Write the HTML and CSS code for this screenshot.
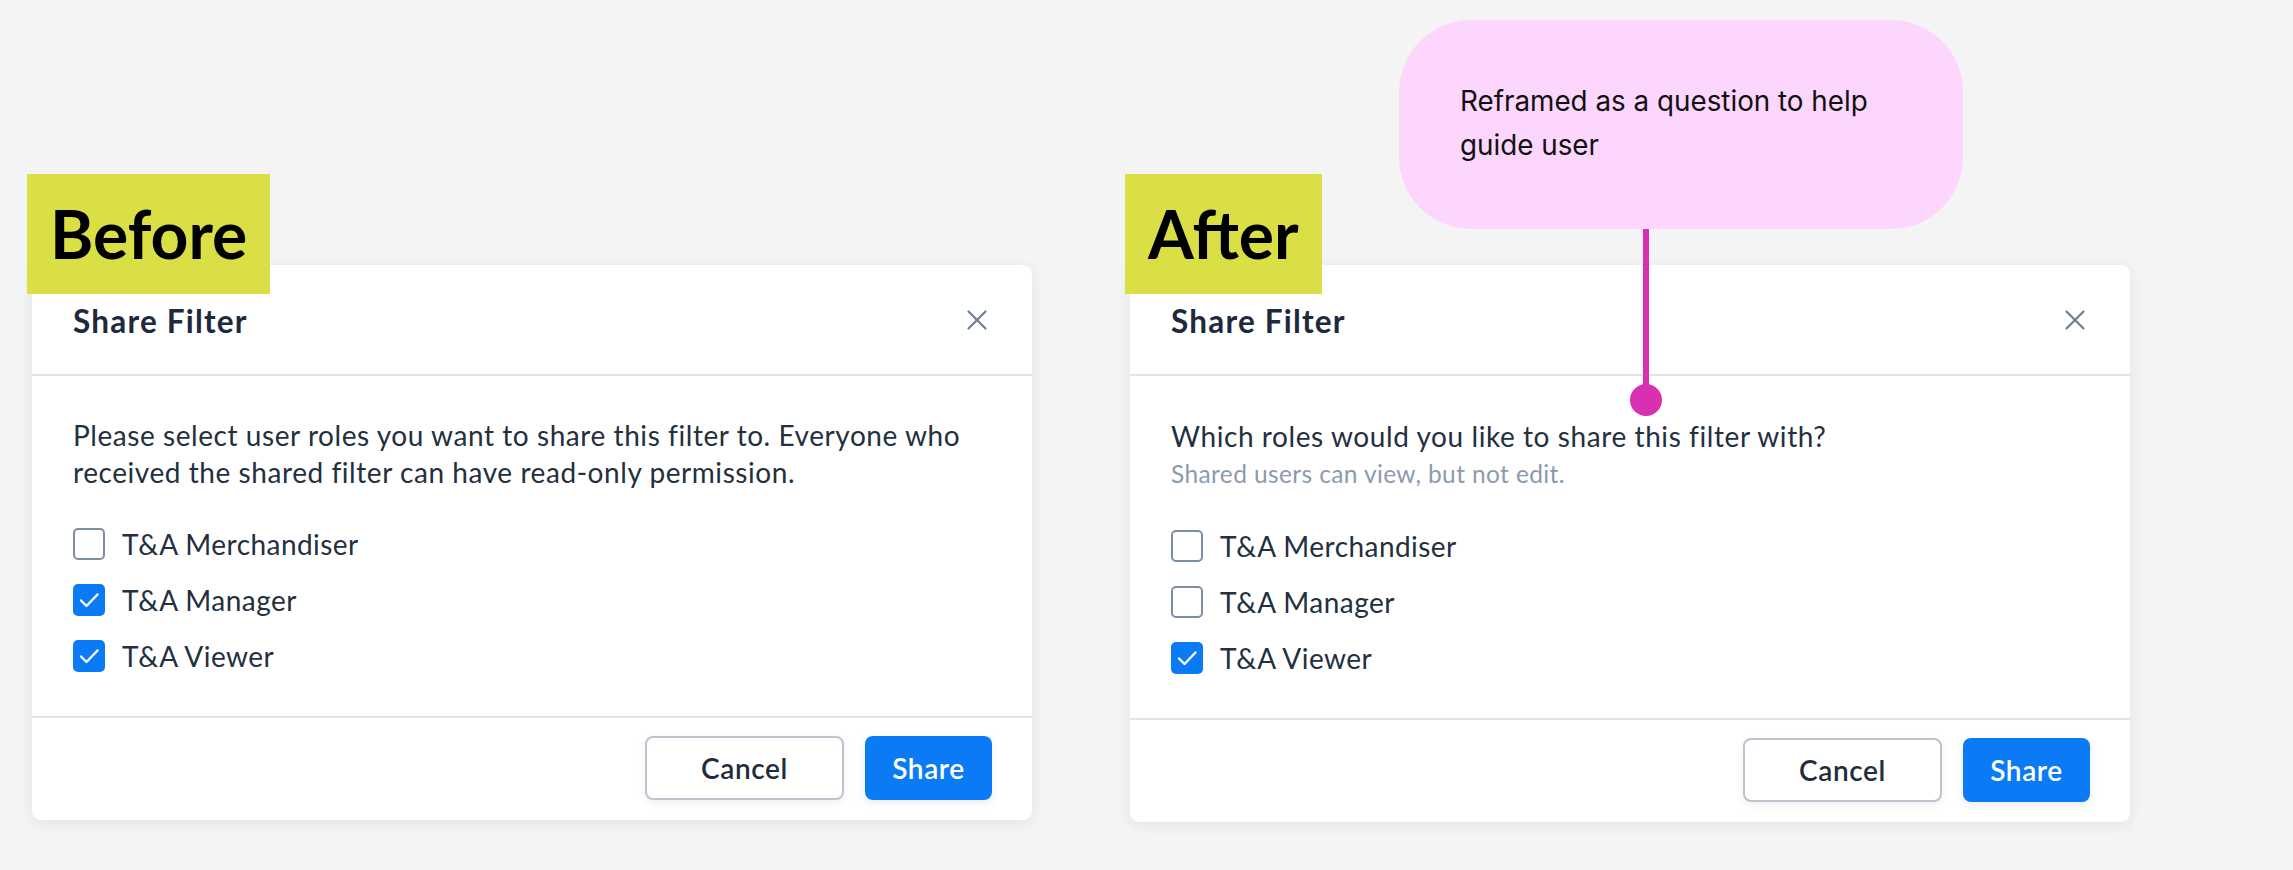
FILE: index.html
```html
<!DOCTYPE html>
<html lang="en">
<head>
<meta charset="utf-8">
<title>Share Filter – Before / After</title>
<link rel="stylesheet" href="styles.css">
</head>
<body>
<div class="page">
  <section class="column">
    <div class="tag">Before</div>
    <div class="card">
      <header class="card-head">
        <h2 class="title">Share Filter</h2>
        <span class="close"><svg viewBox="0 0 28 28" width="28" height="28"><path d="M5.5 5.5 L22.5 22.5 M22.5 5.5 L5.5 22.5" stroke="#6c7f96" stroke-width="2.2" stroke-linecap="round" fill="none"/></svg></span>
      </header>
      <div class="card-body">
        <p class="desc">Please select user roles you want to share this filter to. Everyone who received the shared filter can have read-only permission.</p>
        <ul class="options">
          <li class="option"><span class="box"></span><span>T&amp;A Merchandiser</span></li>
          <li class="option"><span class="box checked"><svg viewBox="0 0 32 32" width="32" height="32"><path d="M8 16.5 L13.5 22 L24.5 10.5" stroke="#fff" stroke-width="2.4" stroke-linecap="round" stroke-linejoin="round" fill="none"/></svg></span><span>T&amp;A Manager</span></li>
          <li class="option"><span class="box checked"><svg viewBox="0 0 32 32" width="32" height="32"><path d="M8 16.5 L13.5 22 L24.5 10.5" stroke="#fff" stroke-width="2.4" stroke-linecap="round" stroke-linejoin="round" fill="none"/></svg></span><span>T&amp;A Viewer</span></li>
        </ul>
      </div>
      <footer class="card-foot">
        <button class="btn btn-cancel">Cancel</button>
        <button class="btn btn-share">Share</button>
      </footer>
    </div>
  </section>

  <section class="column">
    <div class="tag">After</div>
    <div class="card">
      <header class="card-head">
        <h2 class="title">Share Filter</h2>
        <span class="close"><svg viewBox="0 0 28 28" width="28" height="28"><path d="M5.5 5.5 L22.5 22.5 M22.5 5.5 L5.5 22.5" stroke="#6c7f96" stroke-width="2.2" stroke-linecap="round" fill="none"/></svg></span>
      </header>
      <div class="card-body">
        <p class="question">Which roles would you like to share this filter with?</p>
        <p class="hint">Shared users can view, but not edit.</p>
        <ul class="options">
          <li class="option"><span class="box"></span><span>T&amp;A Merchandiser</span></li>
          <li class="option"><span class="box"></span><span>T&amp;A Manager</span></li>
          <li class="option"><span class="box checked"><svg viewBox="0 0 32 32" width="32" height="32"><path d="M8 16.5 L13.5 22 L24.5 10.5" stroke="#fff" stroke-width="2.4" stroke-linecap="round" stroke-linejoin="round" fill="none"/></svg></span><span>T&amp;A Viewer</span></li>
        </ul>
      </div>
      <footer class="card-foot">
        <button class="btn btn-cancel">Cancel</button>
        <button class="btn btn-share">Share</button>
      </footer>
    </div>
  </section>

  <div class="callout">Reframed as a question to help guide user</div>
  <div class="connector"></div>
  <div class="connector-dot"></div>
</div>
</body>
</html>
```

FILE: styles.css
```css
* { box-sizing: border-box; }

html, body {
  margin: 0;
  padding: 0;
  background: #f4f4f4;
}

body {
  font-family: "Lato", "Noto Sans", "DejaVu Sans", sans-serif;
  color: #202c3c;
}

.page {
  position: relative;
  width: 2293px;
  height: 870px;
  display: flex;
  align-items: flex-start;
  gap: 93px;
  padding: 174px 0 0 27px;
}

.column {
  display: flex;
  flex-direction: column;
  align-items: flex-start;
}

.tag {
  position: relative;
  z-index: 2;
  height: 120px;
  margin-bottom: -29px;
  padding: 0 23px;
  display: flex;
  align-items: center;
  background: #d9df45;
  color: #000;
  font-weight: 700;
  font-size: 66px;
  line-height: 1;
}

.card {
  width: 1000px;
  margin-left: 5px;
  background: #fff;
  border-radius: 9px;
  box-shadow: 0 3px 14px rgba(30, 40, 60, 0.08);
}

.card-head {
  height: 111px;
  padding: 0 41px;
  display: flex;
  align-items: center;
  justify-content: space-between;
  border-bottom: 2px solid #e0e4ea;
}

.title {
  margin: 0;
  font-size: 31.5px;
  font-weight: 700;
  letter-spacing: 1.2px;
  color: #1e2a3b;
  padding-top: 2px;
}

.close {
  display: flex;
  width: 28px;
  height: 28px;
}

.card-body {
  padding: 41px 41px 44px;
}

.desc {
  margin: 0 0 37px;
  font-size: 28px;
  line-height: 37px;
  letter-spacing: 0.56px;
  color: #233040;
}

.question {
  margin: 0;
  font-size: 28px;
  line-height: 38px;
  letter-spacing: 0.58px;
  color: #233040;
}

.hint {
  margin: 0 0 37px;
  font-size: 24.5px;
  line-height: 38px;
  letter-spacing: 0.38px;
  color: #8a9bb0;
}

.options {
  list-style: none;
  margin: 0;
  padding: 0;
  display: flex;
  flex-direction: column;
  gap: 24px;
}

.option {
  height: 32px;
  display: flex;
  align-items: center;
  gap: 17px;
  font-size: 28px;
  letter-spacing: 0.45px;
  color: #233040;
}

.box {
  flex: none;
  width: 32px;
  height: 32px;
  border: 2px solid #7d8ea4;
  border-radius: 5px;
  background: #fff;
  display: flex;
}

.box.checked {
  border: none;
  background: #0a7bf5;
}

.card-foot {
  border-top: 2px solid #e0e4ea;
  padding: 18px 40px 20px;
  display: flex;
  justify-content: flex-end;
  gap: 21px;
}

.btn {
  height: 64px;
  border-radius: 8px;
  font-family: inherit;
  font-size: 28px;
  font-weight: 600;
  letter-spacing: 0.6px;
  padding: 0;
  cursor: pointer;
}

.btn-cancel {
  width: 199px;
  background: #fff;
  border: 2px solid #bcc4cf;
  color: #1f2d3d;
  box-shadow: 0 3px 8px rgba(30, 40, 60, 0.07);
}

.btn-share {
  width: 127px;
  background: #0a7bf5;
  border: none;
  color: #fff;
  box-shadow: 0 3px 8px rgba(10, 80, 160, 0.1);
}

.callout {
  position: absolute;
  left: 1399px;
  top: 20px;
  width: 564px;
  height: 209px;
  padding: 59px 61px 0;
  border-radius: 72px;
  background: #fdd6fd;
  font-family: "Inter", "Noto Sans", sans-serif;
  font-size: 27.8px;
  line-height: 44px;
  color: #111;
}

.connector {
  position: absolute;
  z-index: 3;
  left: 1643px;
  top: 229px;
  width: 6px;
  height: 170px;
  background: #d92fb1;
}

.connector-dot {
  position: absolute;
  z-index: 3;
  left: 1630px;
  top: 384px;
  width: 32px;
  height: 32px;
  border-radius: 50%;
  background: #d92fb1;
}
```
